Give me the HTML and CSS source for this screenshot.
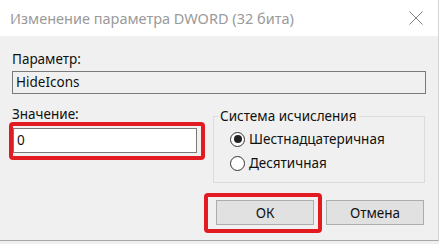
FILE: index.html
```html
<!DOCTYPE html>
<html lang="ru">
<head>
    <meta charset="UTF-8">
    <meta name="viewport" content="width=device-width, initial-scale=1.0">
    <title>Изменение параметра DWORD (32 бита)</title>
    <link rel="stylesheet" href="styles.css">
</head>
<body>
    <div class="window">
        <div class="titlebar">
            <span class="title">Изменение параметра DWORD (32 бита)</span>
            <svg class="close" width="14" height="14" viewBox="0 0 14 14">
                <path d="M0.5 0.5 L13.5 13.5 M13.5 0.5 L0.5 13.5" stroke="#808080" stroke-width="1" fill="none"/>
            </svg>
        </div>

        <div class="content">
            <div class="field-label">Параметр:</div>
            <div class="textbox readonly">HideIcons</div>

            <div class="row">
                <div class="value-col">
                    <div class="field-label">Значение:</div>
                    <div class="marked value-wrap">
                        <div class="textbox value">0</div>
                        <span class="highlight"></span>
                    </div>
                </div>

                <fieldset class="group">
                    <legend>Система исчисления</legend>
                    <label class="radio-row">
                        <span class="radio checked"></span>
                        <span>Шестнадцатеричная</span>
                    </label>
                    <label class="radio-row">
                        <span class="radio"></span>
                        <span>Десятичная</span>
                    </label>
                </fieldset>
            </div>

            <div class="buttons">
                <div class="marked">
                    <button class="btn">ОК</button>
                    <span class="highlight ok-mark"></span>
                </div>
                <button class="btn">Отмена</button>
            </div>
        </div>
    </div>
</body>
</html>
```

FILE: styles.css
```css
body {
    margin: 0;
    width: 439px;
    height: 244px;
    overflow: hidden;
    background: #f0f0f0;
    font-family: 'Noto Sans', 'Open Sans', sans-serif;
    font-size: 13.5px;
    color: #111;
}

.window {
    height: 241px;
    border-bottom: 1px solid #a8a8a8;
    border-right: 1px solid #d4d4d4;
    box-sizing: border-box;
}

.titlebar {
    height: 36px;
    background: #fff;
    display: flex;
    align-items: center;
    justify-content: space-between;
    padding: 0 15px 0 10px;
}

.title {
    color: #9a9a9a;
    font-size: 14.5px;
}

.close {
    display: block;
}

.content {
    padding: 15px 12px 0 12px;
}

.field-label {
    line-height: 16px;
}

.textbox {
    box-sizing: border-box;
    height: 23px;
    margin-top: 4px;
    border: 1px solid #7a7a7a;
    padding: 0 3px;
    line-height: 21px;
}

.textbox.readonly {
    background: #f0f0f0;
}

.row {
    display: flex;
    margin-top: 12px;
}

.value-col {
    width: 188px;
}

.marked {
    position: relative;
}

.value-wrap {
    margin: 6px 0 0 1px;
    width: 184px;
}

.textbox.value {
    margin-top: 0;
    height: 25px;
    line-height: 23px;
    background: #fff;
}

.highlight {
    position: absolute;
    left: -4px;
    top: -6px;
    right: -8px;
    bottom: -7px;
    border: 4px solid #e21b23;
    border-radius: 4px;
    pointer-events: none;
}

.highlight.ok-mark {
    left: -12px;
    top: -7px;
    right: -8px;
    bottom: -8px;
}

.group {
    flex: 1;
    margin: 2px 1px 0 13px;
    padding: 3px 0 7px 16px;
    border: 1px solid #dcdcdc;
    min-width: 0;
}

.group legend {
    padding: 0 2px;
    margin-left: -12px;
    line-height: 16px;
}

.radio-row {
    display: flex;
    align-items: center;
    height: 24px;
    gap: 4px;
}

.radio {
    box-sizing: border-box;
    width: 15px;
    height: 15px;
    border: 1px solid #333;
    border-radius: 50%;
    background: #fff;
    display: flex;
    align-items: center;
    justify-content: center;
}

.radio.checked::after {
    content: "";
    width: 8px;
    height: 8px;
    border-radius: 50%;
    background: #222;
}

.buttons {
    display: flex;
    justify-content: flex-end;
    gap: 12px;
    margin-top: 17px;
    padding-right: 2px;
}

.btn {
    display: block;
    width: 98px;
    height: 25px;
    background: #e1e1e1;
    border: 1px solid #adadad;
    font-family: inherit;
    font-size: 13.5px;
    color: #111;
    padding: 0;
}
```
